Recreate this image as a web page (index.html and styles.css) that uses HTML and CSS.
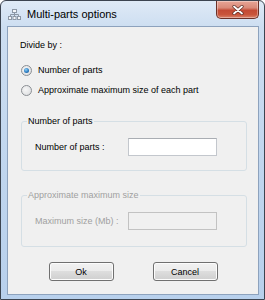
FILE: index.html
```html
<!DOCTYPE html>
<html>
<head>
<meta charset="utf-8">
<link rel="stylesheet" href="styles.css">
</head>
<body>
<div class="window">
  <div class="titlebar">
    <svg class="app-icon" width="13" height="12" viewBox="0 0 13 12">
      <rect x="4.5" y="0.5" width="4" height="3" fill="#f4f6f9" stroke="#8d98a6"/>
      <path d="M6.5 3.5v2M2.5 7.5v-2h8v2M6.5 5.5v2" stroke="#8d98a6" fill="none"/>
      <rect x="0.5" y="7.5" width="3" height="3" fill="#f4f6f9" stroke="#8d98a6"/>
      <rect x="5" y="7.5" width="3" height="3" fill="#f4f6f9" stroke="#8d98a6"/>
      <rect x="9.5" y="7.5" width="3" height="3" fill="#f4f6f9" stroke="#8d98a6"/>
    </svg>
    <span class="title">Multi-parts options</span>
    <div class="close">
      <svg width="12" height="10" viewBox="0 0 12 10">
        <path d="M2 1.5L10 8.5M10 1.5L2 8.5" stroke="#5a2a22" stroke-width="3.2" stroke-linecap="round"/>
        <path d="M2 1.5L10 8.5M10 1.5L2 8.5" stroke="#ffffff" stroke-width="1.8" stroke-linecap="round"/>
      </svg>
    </div>
  </div>
  <div class="client">
    <div class="caption">Divide by :</div>
    <div class="radios">
      <div class="radio-row"><span class="radio checked"></span><span>Number of parts</span></div>
      <div class="radio-row"><span class="radio"></span><span>Approximate maximum size of each part</span></div>
    </div>
    <fieldset class="group">
      <legend>Number of parts</legend>
      <div class="field-row">
        <span class="field-label">Number of parts :</span>
        <span class="textbox"></span>
      </div>
    </fieldset>
    <fieldset class="group disabled">
      <legend>Approximate maximum size</legend>
      <div class="field-row">
        <span class="field-label">Maximum size (Mb) :</span>
        <span class="textbox"></span>
      </div>
    </fieldset>
    <div class="buttons">
      <button class="btn">Ok</button>
      <button class="btn">Cancel</button>
    </div>
  </div>
</div>
</body>
</html>
```

FILE: styles.css
```css
* { box-sizing: border-box; }
html, body { margin: 0; padding: 0; background: #ffffff; }
body { width: 265px; height: 300px; overflow: hidden; }

.window {
  width: 265px;
  height: 300px;
  border: 1px solid #3c4450;
  border-radius: 6px 6px 0 0;
  background: linear-gradient(to bottom, #dfeaf6 0px, #cddef1 26px, #bfd5ee 60%, #b8d0ec 100%);
  padding: 0 5px 4px 6px;
  display: flex;
  flex-direction: column;
  font-family: "Liberation Sans", Arial, sans-serif;
}

.titlebar {
  height: 25px;
  display: flex;
  align-items: flex-start;
}
.app-icon { margin: 8px 0 0 1px; flex: none; }
.title {
  margin: 6px 0 0 6px;
  font-size: 11px;
  line-height: 14px;
  color: #000;
}
.close {
  margin-left: auto;
  width: 43px;
  height: 18px;
  border: 1px solid #6b3027;
  border-top: none;
  border-radius: 0 0 5px 5px;
  background: linear-gradient(to bottom, #e8a596 0%, #d98a79 40%, #c34a34 55%, #c9553b 80%, #d9826a 100%);
  box-shadow: inset 0 0 0 1px rgba(255,255,255,0.35);
  display: flex;
  align-items: center;
  justify-content: center;
}

.client {
  flex: 1;
  border: 1px solid #8da2bd;
  background: #f0f0f0;
  padding: 13px 12px 0 12px;
  font-size: 9px;
  line-height: 11px;
  color: #000;
}

.caption { height: 11px; }

.radios { margin-top: 14px; display: flex; flex-direction: column; gap: 9px; }
.radio-row { display: flex; align-items: center; height: 11px; gap: 6px; }
.radio {
  flex: none;
  width: 11px;
  height: 11px;
  margin-left: 1px;
  border-radius: 50%;
  border: 1px solid #8b8f94;
  background: radial-gradient(circle at 40% 40%, #f6f6f6 0%, #e2e3e5 70%, #d4d6d9 100%);
  position: relative;
}
.radio.checked::after {
  content: "";
  position: absolute;
  left: 2px; top: 2px;
  width: 5px; height: 5px;
  border-radius: 50%;
  background: radial-gradient(circle at 40% 35%, #8fd0f5 0%, #2d7fc4 55%, #17457a 100%);
}

.group {
  margin: 20px 0 0 1px;
  width: 226px;
  border: 1px solid #d5dfe5;
  border-radius: 3px;
  padding: 11px 5px 14px 5px;
  min-width: 0;
}
.group legend {
  padding: 0 1px;
  font-size: 9px;
  line-height: 11px;
}
.group.disabled { margin-top: 19px; padding-top: 11px; padding-bottom: 16px; }
.group.disabled legend, .group.disabled .field-label { color: #a0a0a0; }

.field-row { display: flex; align-items: center; height: 18px; }
.field-label { width: 101px; padding-left: 8px; }
.textbox {
  width: 89px;
  height: 18px;
  border: 1px solid #c3c7cd;
  border-top-color: #a9adb3;
  background: #ffffff;
}
.group.disabled .textbox { background: #f0f0f0; border-color: #c2c2c2; }

.buttons {
  margin-top: 15px;
  display: flex;
  justify-content: center;
  gap: 39px;
}
.btn {
  width: 65px;
  height: 19px;
  padding: 0;
  font-family: "Liberation Sans", Arial, sans-serif;
  font-size: 9px;
  color: #000;
  border: 1px solid #707070;
  border-radius: 3px;
  background: linear-gradient(to bottom, #f2f2f2 0%, #ebebeb 49%, #dddddd 50%, #cfcfcf 100%);
  box-shadow: inset 0 0 0 1px #fcfcfc;
}
```
